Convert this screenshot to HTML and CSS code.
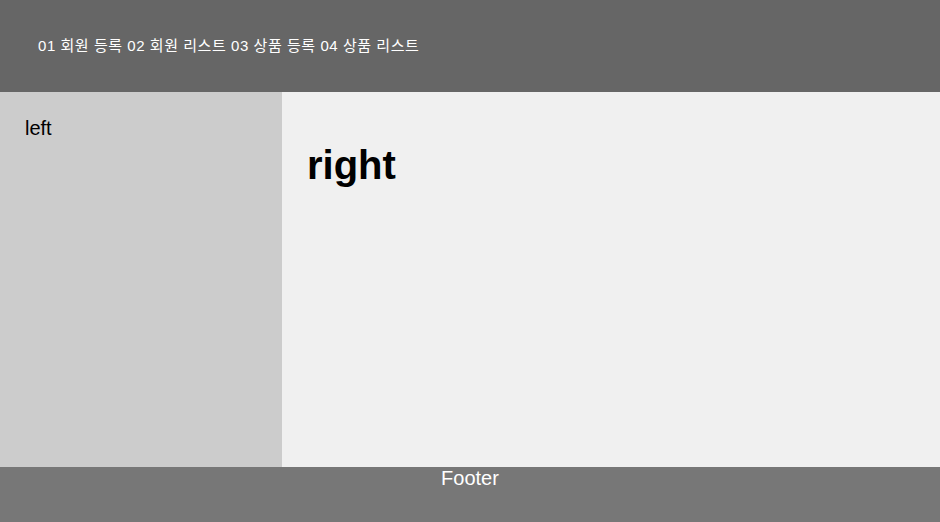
FILE: index.html
```html
<!DOCTYPE html>
<html lang="ko">
<head>
  <meta charset="UTF-8" />
  <meta name="viewport" content="width=device-width, initial-scale=1.0"/>
  <title>Layout</title>
  <link rel="stylesheet" href="styles.css">
</head>
<body>
  <header class="header">
    <nav class="menu">
      <span>01 회원 등록</span>
      <span>02 회원 리스트</span>
      <span>03 상품 등록</span>
      <span>04 상품 리스트</span>
    </nav>
  </header>

  <div class="main">
    <aside class="left">left</aside>
    <section class="right">
      <h1>right</h1>
    </section>
  </div>

  <footer class="footer">Footer</footer>
</body>
</html>
```

FILE: styles.css
```css
* { box-sizing: border-box; margin: 0; padding: 0; }
body {
  font-family: 'Liberation Sans', Arial, 'Noto Sans CJK KR', sans-serif;
  height: 522px;
  display: flex;
  flex-direction: column;
}
.header {
  height: 92px;
  background: #666;
  color: white;
  display: flex;
  align-items: center;
  padding-left: 38px;
}
.menu {
  font-size: 15px;
  letter-spacing: 0.55px;
  padding-bottom: 3px;
}
.main {
  flex: 1;
  display: flex;
}
.left {
  width: 282px;
  background: #ccc;
  padding: 25px;
  font-size: 20px;
}
.right {
  flex: 1;
  background: #f0f0f0;
  padding: 25px;
}
.right h1 {
  font-size: 40px;
  margin-top: 26px;
}
.footer {
  height: 55px;
  background: #777;
  color: white;
  text-align: center;
  font-size: 20px;
}
```
